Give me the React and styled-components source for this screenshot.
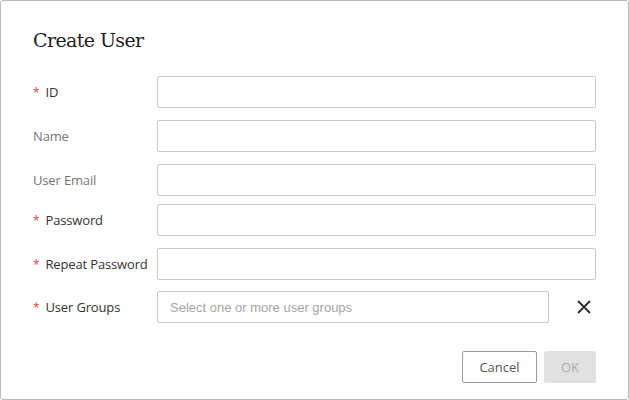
import React from 'react'
import styled, { createGlobalStyle } from 'styled-components'

const GlobalStyle = createGlobalStyle`
  html, body {
    margin: 0;
    padding: 0;
    background: #fff;
  }
  * {
    box-sizing: border-box;
  }
`

const fields = [
  { label: 'ID', required: true },
  { label: 'Name' },
  { label: 'User Email' },
  { label: 'Password', required: true, tight: true, type: 'password' },
  { label: 'Repeat Password', required: true, type: 'password' },
]

export default function App () {
  return (
    <>
      <GlobalStyle />
      <Dialog>
        <Title>Create User</Title>
        <Form>
          {fields.map(f => (
            <Row key={f.label} $tight={f.tight}>
              <Label $required={f.required}>
                {f.required && <Star>*</Star>}
                {f.label}
              </Label>
              <Input type={f.type || 'text'} />
            </Row>
          ))}
          <Row $gap={11}>
            <Label $required>
              <Star>*</Star>
              User Groups
            </Label>
            <GroupLine>
              <GroupSelect>Select one or more user groups</GroupSelect>
              <ClearButton aria-label="clear">
                <svg width="16" height="16" viewBox="0 0 16 16">
                  <path d="M2 2 L14 14 M14 2 L2 14" stroke="#2b2b2b" strokeWidth="1.8" fill="none" />
                </svg>
              </ClearButton>
            </GroupLine>
          </Row>
        </Form>
        <Footer>
          <Button>Cancel</Button>
          <Button $primary disabled>OK</Button>
        </Footer>
      </Dialog>
    </>
  )
}

const Dialog = styled.div`
  width: 629px;
  height: 400px;
  border: 1px solid #b9b9b9;
  border-radius: 3px;
  padding: 25px 32px 0 32px;
  background: #fff;
  font-family: "Open Sans", "Noto Sans", sans-serif;
`

const Title = styled.h2`
  margin: 0;
  font-family: "DejaVu Serif", serif;
  font-weight: normal;
  font-size: 19px;
  letter-spacing: -0.6px;
  line-height: 28px;
  color: #1e1e1e;
`

const Form = styled.div`
  margin-top: 22px;
  display: flex;
  flex-direction: column;
`

const Row = styled.div`
  display: grid;
  grid-template-columns: 124px 1fr;
  align-items: center;
  margin-top: ${p => (p.$tight ? 8 : p.$gap || 12)}px;
  &:first-child {
    margin-top: 0;
  }
`

const Label = styled.label`
  font-size: 13px;
  letter-spacing: -0.15px;
  color: ${p => (p.$required ? '#333' : '#757575')};
  white-space: nowrap;
  display: flex;
  align-items: center;
`

const Star = styled.span`
  color: #e2453c;
  font-size: 12px;
  margin-right: 6px;
`

const Input = styled.input`
  height: 32px;
  width: 100%;
  border: 1px solid #c9c9c9;
  border-radius: 2px;
  padding: 0 12px;
  font-size: 13px;
  outline: none;
  background: #fff;
`

const GroupLine = styled.div`
  display: flex;
  align-items: center;
`

const GroupSelect = styled.div`
  width: 392px;
  height: 32px;
  border: 1px solid #c9c9c9;
  border-radius: 2px;
  padding: 0 12px;
  display: flex;
  align-items: center;
  font-family: "Liberation Sans", Arial, sans-serif;
  font-size: 13px;
  color: #a5a5a5;
`

const ClearButton = styled.button`
  margin-left: 27px;
  width: 16px;
  height: 16px;
  padding: 0;
  border: none;
  background: none;
  display: flex;
  cursor: pointer;
`

const Footer = styled.div`
  margin-top: 28px;
  display: flex;
  justify-content: flex-end;
  gap: 7px;
`

const Button = styled.button`
  height: 32px;
  min-width: ${p => (p.$primary ? '52px' : '75px')};
  padding: 0 14px;
  border-radius: 2px;
  font-family: "Open Sans", "Noto Sans", sans-serif;
  font-size: 13px;
  border: 1px solid ${p => (p.$primary ? '#e1e1e1' : '#9a9a9a')};
  background: ${p => (p.$primary ? '#e1e1e1' : '#fff')};
  color: ${p => (p.$primary ? '#ababab' : '#555')};
  cursor: ${p => (p.$primary ? 'default' : 'pointer')};
`
